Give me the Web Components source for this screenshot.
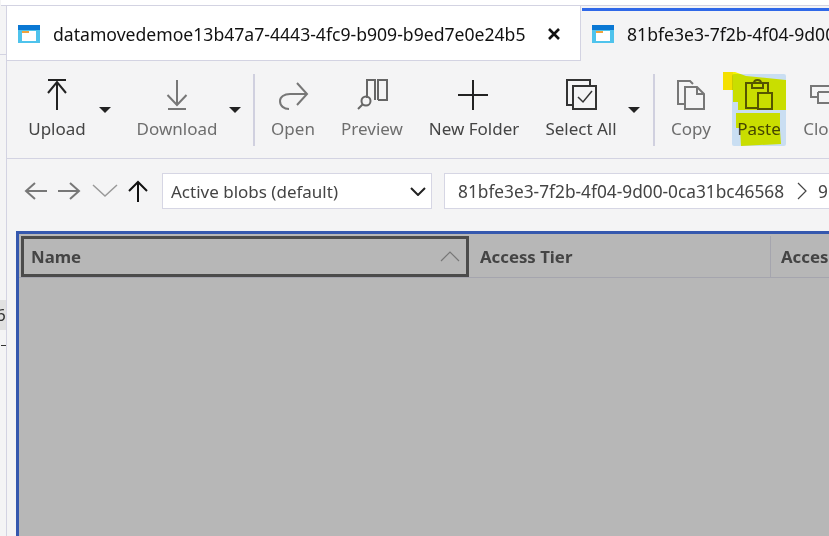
<!DOCTYPE html>
<html>
<head>
<meta charset="utf-8">
<style>
  html, body { margin: 0; height: 536px; overflow: hidden; background: #fff; }
  body { font-family: "Noto Sans", "Open Sans", sans-serif; }
</style>
</head>
<body>
<explorer-app>
  <side-strip slot="side"></side-strip>
  <tab-strip slot="tabs">
    <blob-tab active>datamovedemoe13b47a7-4443-4fc9-b909-b9ed7e0e24b5</blob-tab>
    <blob-tab>81bfe3e3-7f2b-4f04-9d00-0ca31bc46568</blob-tab>
  </tab-strip>
  <tool-bar slot="toolbar"></tool-bar>
  <address-bar slot="address"></address-bar>
  <blob-table slot="table"></blob-table>
</explorer-app>

<script>
class ExplorerApp extends HTMLElement {
  constructor () {
    super()
    this.attachShadow({ mode: 'open' }).innerHTML = /*html*/`
    <style>
      :host { display: flex; width: 829px; height: 536px; overflow: hidden; background: #f4f4f5; }
      .main { display: flex; flex-direction: column; flex: 1; min-width: 0; }
      .top { height: 5px; flex: none; margin-left: -6px; background: #fff; border-bottom: 1px solid #d3d3e2; }
    </style>
    <slot name="side"></slot>
    <div class="main">
      <div class="top"></div>
      <slot name="tabs"></slot>
      <slot name="toolbar"></slot>
      <slot name="address"></slot>
      <slot name="table"></slot>
    </div>`
  }
}

class SideStrip extends HTMLElement {
  constructor () {
    super()
    this.attachShadow({ mode: 'open' }).innerHTML = /*html*/`
    <style>
      :host { display: block; flex: none; box-sizing: border-box; width: 7px; padding-top: 54px; border-right: 1px solid #d3d3e2; overflow: hidden; color: #333; font-size: 17px; }
      .line { height: 1px; background: #d3d3e2; }
      .row { margin-top: 245px; height: 30px; line-height: 30px; background: #e1e1e1; white-space: nowrap; text-indent: -4px; }
      .dash { margin: 15px 0 0 1px; width: 5px; height: 1px; background: #333; }
    </style>
    <div class="line"></div>
    <div class="row">6</div>
    <div class="dash"></div>`
  }
}

class TabStrip extends HTMLElement {
  constructor () {
    super()
    this.attachShadow({ mode: 'open' }).innerHTML = /*html*/`
    <style>
      :host { display: flex; height: 55px; flex: none; overflow: hidden; }
    </style>
    <slot></slot>`
  }
}

class BlobTab extends HTMLElement {
  constructor () {
    super()
    const active = this.hasAttribute('active')
    this.attachShadow({ mode: 'open' }).innerHTML = /*html*/`
    <style>
      :host { display: flex; align-items: center; box-sizing: border-box; flex: none; color: #111; font-size: 17.6px; white-space: nowrap; }
      :host([active]) { width: 574px; background: #fff; padding: 2px 20px 0 11px; border-right: 1px solid #d3d3e2; border-bottom: 1px solid #d3d3e2; margin-right: 1px; }
      :host(:not([active])) { width: 300px; padding: 0 0 4px 10px; border-top: 3px solid #2f68e8; margin-top: 2px; }
      svg.ico { width: 22px; height: 18px; flex: none; margin-right: 13px; }
      .text { flex: 1; }
      .x { width: 12px; height: 12px; flex: none; }
    </style>
    <svg class="ico" viewBox="0 0 22 18">
      <rect width="22" height="18" fill="#4fc3ec"/>
      <rect width="22" height="5" fill="#0a78d4"/>
      <rect x="4" y="6" width="14" height="10" fill="#fff"/>
      <rect x="4" y="6" width="7" height="2" fill="#f2a33c"/>
    </svg>
    <span class="text"><slot></slot></span>
    ${active ? '<svg class="x" viewBox="0 0 12 12"><path d="M1 1L11 11M11 1L1 11" stroke="#111" stroke-width="2.6" fill="none"/></svg>' : ''}`
  }
}

class ToolButton extends HTMLElement {
  constructor () {
    super()
    this.attachShadow({ mode: 'open' }).innerHTML = /*html*/`
    <style>
      :host { display: flex; flex-direction: column; align-items: center; flex: none; height: 72px; box-sizing: border-box; padding-top: 5px; color: #6e6e6e; font-size: 17px; white-space: nowrap; }
      :host([dark]) { color: #444; }
      :host([selected]) { background: #c9def2; border-radius: 2px; color: #444; }
      ::slotted(svg) { display: block; height: 32px; width: 40px; }
      .label { margin-top: 6px; line-height: 24px; }
    </style>
    <slot name="icon"></slot>
    <div class="label"><slot></slot></div>`
  }
}

class ToolCaret extends HTMLElement {
  constructor () {
    super()
    this.attachShadow({ mode: 'open' }).innerHTML = /*html*/`
    <style>
      :host { display: flex; justify-content: center; flex: none; width: 26px; height: 72px; padding-top: 33px; box-sizing: border-box; }
      i { display: block; width: 0; height: 0; border-left: 6px solid transparent; border-right: 6px solid transparent; border-top: 6px solid #222; }
    </style>
    <i></i>`
  }
}

class ToolBar extends HTMLElement {
  constructor () {
    super()
    const svg = (body, color) => `<svg slot="icon" viewBox="0 0 40 32" fill="none" stroke="${color}" stroke-width="2">${body}</svg>`
    this.attachShadow({ mode: 'open' }).innerHTML = /*html*/`
    <style>
      :host { display: flex; position: relative; flex: none; box-sizing: border-box; height: 98px; padding: 13px 0 0 15px; border-bottom: 1px solid #d3d3e2; overflow: hidden; }
      .sep { flex: none; width: 2px; height: 72px; background: #d0d0df; }
      .marks { position: absolute; left: -7px; top: -61px; width: 829px; height: 160px; mix-blend-mode: multiply; pointer-events: none; }
    </style>
    <tool-button dark style="width:70px">${svg('<path d="M11 1H29M20 31V3M11 14L20 3L29 14"/>', '#222')}Upload</tool-button>
    <tool-caret></tool-caret>
    <tool-button style="width:90px;margin-left:14px">${svg('<path d="M20 1V26M10.500 16L20 26L29.500 16M11 30H29"/>', '#777')}Download</tool-button>
    <tool-caret></tool-caret>
    <div class="sep" style="margin:0 8px 0 5px"></div>
    <tool-button style="width:60px">${svg('<path d="M34 15H17C11 15 7 18 7 22C7 27 11 30 16 30M24 4L34 15L24 26"/>', '#777')}Open</tool-button>
    <tool-button style="width:70px;margin-left:14px">${svg('<path d="M15 19V1H23V21M26 21V1H35V21H26"/><circle cx="14" cy="22" r="4.500"/><path d="M10.500 25.500L6 30"/>', '#666')}Preview</tool-button>
    <tool-button dark style="width:100px;margin-left:17px">${svg('<path d="M4 16H34M19 1V31"/>', '#222')}New Folder</tool-button>
    <tool-button dark style="width:80px;margin-left:17px">${svg('<path d="M12 26H6V1H29V7"/><rect x="12" y="7" width="23" height="23"/><path d="M17 18L22 23L31 12" stroke-width="1.500"/>', '#333')}Select All</tool-button>
    <tool-caret></tool-caret>
    <div class="sep" style="margin:0 6px"></div>
    <tool-button style="width:60px">${svg('<path d="M14 25H7V2H19L22 5M14 8H26L33 15V30H14V8ZM26 8V15H33"/>', '#777')}Copy</tool-button>
    <tool-button selected style="width:54px;margin-left:11px">${svg('<path d="M18 29H7V4H29V13M13 4V9H24V4M15 4C15 0 22 0 22 4"/><rect x="19" y="14" width="14" height="16"/>', '#555')}Paste</tool-button>
    <tool-button style="width:60px;margin-left:10px">${svg('<path d="M12 18H5V7H36M12 13H42V24H12V13"/>', '#777')}Clone</tool-button>
    <svg class="marks" viewBox="0 0 829 160">
      <path d="M733 72H735L746 76L786 80V110H738V102H733Z" fill="#ffff00"/>
      <path d="M723 72H733V90H723Z" fill="#ffea00"/>
      <path d="M736 113H780V130L781 144L741 146L740 128L736 128Z" fill="#ffff00"/>
    </svg>`
  }
}

class AddressBar extends HTMLElement {
  constructor () {
    super()
    this.attachShadow({ mode: 'open' }).innerHTML = /*html*/`
    <style>
      :host { display: flex; align-items: center; flex: none; box-sizing: border-box; height: 72px; padding: 0 0 8px 17px; color: #444; font-size: 17px; white-space: nowrap; }
      svg { flex: none; display: block; }
      .box { display: flex; align-items: center; flex: none; box-sizing: border-box; height: 36px; background: #fff; border: 1px solid #d6d6e4; }
      .filter { width: 270px; padding: 0 5px 0 8px; justify-content: space-between; margin-left: 14px; }
      .crumbs { width: 400px; padding-left: 13px; margin-left: 12px; overflow: hidden; font-size: 17.300px; }
    </style>
    <svg width="24" height="20" viewBox="0 0 24 20" fill="none" stroke="#777" stroke-width="2"><path d="M23 10H3M11 2L2 10L11 18"/></svg>
    <svg width="24" height="20" viewBox="0 0 24 20" fill="none" stroke="#777" stroke-width="2" style="margin-left:9px"><path d="M1 10H21M13 2L22 10L13 18"/></svg>
    <svg width="26" height="14" viewBox="0 0 26 14" fill="none" stroke="#999" stroke-width="1.500" style="margin-left:11px"><path d="M1 1L13 12L25 1"/></svg>
    <svg width="20" height="22" viewBox="0 0 20 22" fill="none" stroke="#111" stroke-width="2" style="margin-left:10px"><path d="M10 22V2M1 11L10 2L19 11"/></svg>
    <div class="box filter">
      <span>Active blobs (default)</span>
      <svg width="16" height="9" viewBox="0 0 16 9" fill="none" stroke="#222" stroke-width="2"><path d="M1 1L8 8L15 1"/></svg>
    </div>
    <div class="box crumbs">
      <span>81bfe3e3-7f2b-4f04-9d00-0ca31bc46568</span>
      <svg width="10" height="18" viewBox="0 0 10 18" fill="none" stroke="#444" stroke-width="1.200" style="margin:0 11px 0 13px"><path d="M1 1L9 9L1 17"/></svg>
      <span>9c00</span>
    </div>`
  }
}

class BlobColumn extends HTMLElement {
  constructor () {
    super()
    this.attachShadow({ mode: 'open' }).innerHTML = /*html*/`
    <style>
      :host { display: flex; align-items: center; justify-content: space-between; box-sizing: border-box; flex: none; height: 100%; padding: 0 10px; border-right: 1px solid #a5a5ae; color: #444; font-size: 16.800px; font-weight: 700; white-space: nowrap; }
      :host([focused]) { border: 3px solid #4b4b4b; padding: 0 6px 0 7px; }
    </style>
    <slot></slot>
    <slot name="sort"></slot>`
  }
}

class BlobTable extends HTMLElement {
  constructor () {
    super()
    this.attachShadow({ mode: 'open' }).innerHTML = /*html*/`
    <style>
      :host { display: block; flex: 1; box-sizing: border-box; margin-left: 9px; border: solid #3558ae; border-width: 3px 0 0 3px; background: #b7b7b7; overflow: hidden; }
      .head { display: flex; box-sizing: border-box; height: 44px; padding: 2px 0 0 2px; border-bottom: 1px solid #a5a5ae; }
    </style>
    <div class="head">
      <blob-column focused style="width:448px">Name<svg slot="sort" width="20" height="11" viewBox="0 0 20 11" fill="none" stroke="#777" stroke-width="1.200"><path d="M1 10L10 1L19 10"/></svg></blob-column>
      <blob-column style="width:301px;margin-left:1px">Access Tier</blob-column>
      <blob-column style="width:200px">Access Tier Last Modified</blob-column>
    </div>`
  }
}

customElements.define('explorer-app', ExplorerApp)
customElements.define('side-strip', SideStrip)
customElements.define('tab-strip', TabStrip)
customElements.define('blob-tab', BlobTab)
customElements.define('tool-button', ToolButton)
customElements.define('tool-caret', ToolCaret)
customElements.define('tool-bar', ToolBar)
customElements.define('address-bar', AddressBar)
customElements.define('blob-column', BlobColumn)
customElements.define('blob-table', BlobTable)
</script>
</body>
</html>
